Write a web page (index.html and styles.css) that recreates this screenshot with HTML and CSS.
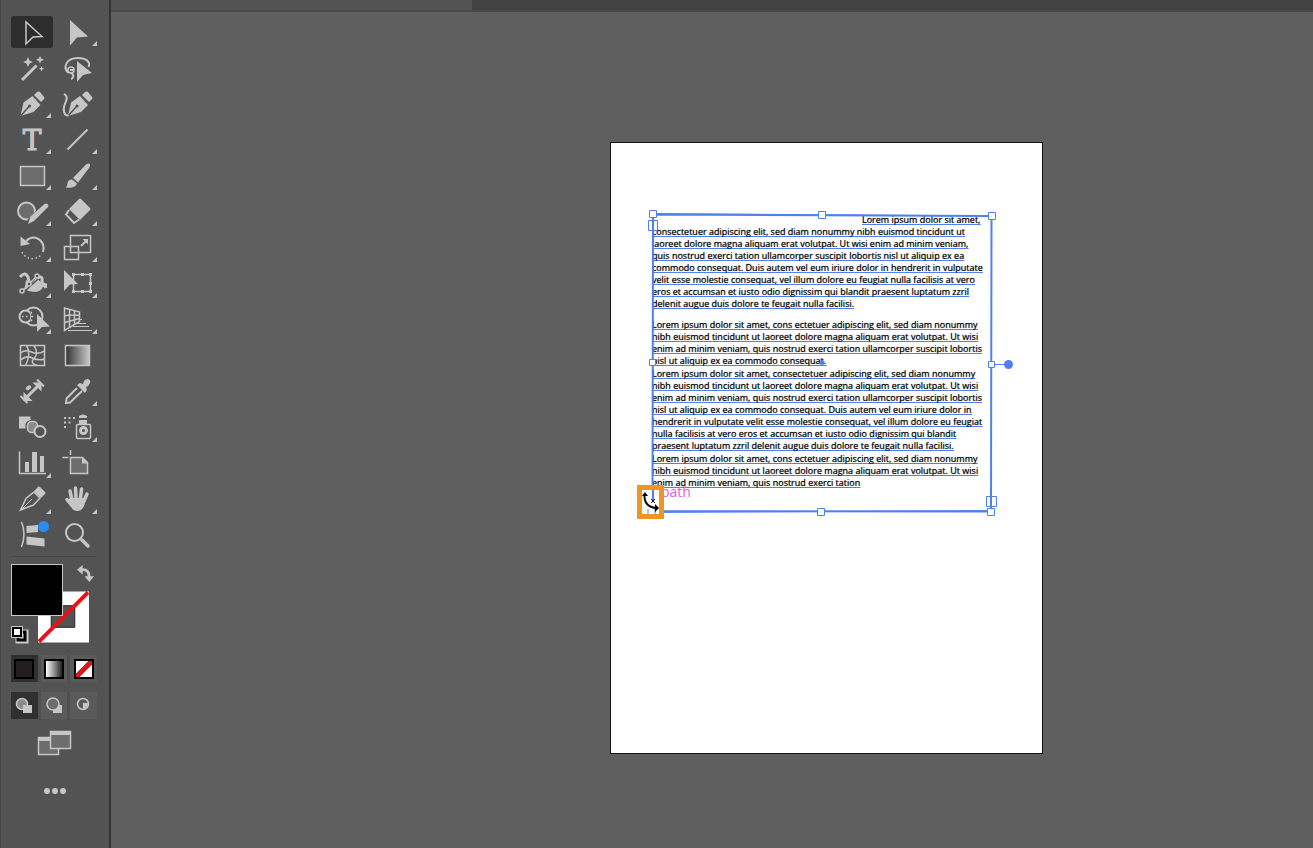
FILE: index.html
```html
<!DOCTYPE html>
<html lang="en">
<head>
    <meta charset="UTF-8">
    <meta name="viewport" content="width=device-width, initial-scale=1.0">
    <title>Vector editor</title>
    <link rel="stylesheet" href="styles.css">
</head>
<body>
    <div class="toolbar">
        <div class="tools">
            <button class="tool active" aria-label="Selection"><svg viewBox="0 0 42 32"><path class="line" d="M15 6v22l7-7 9-.5z"/></svg></button>
            <button class="tool more" aria-label="Direct selection"><svg viewBox="0 0 42 32"><path d="M13 4v25.500l7-8 11-1z"/></svg></button>

            <button class="tool" aria-label="Magic wand"><svg viewBox="0 0 42 32"><path class="line thick" d="M11 28L25.500 13.500"/><path d="M17 5l1.500 3.500L22 10l-3.500 1.500L17 15l-1.500-3.500L12 10l3.500-1.500zM29 4l1.200 2.500L33 7.700l-2.800 1.200L29 11.500l-1.200-2.600L25 7.700l2.800-1.200zM30.500 14l.8 1.900 1.900.8-1.900.8-.8 1.900-.8-1.900-1.900-.8 1.900-.8z"/></svg></button>
            <button class="tool" aria-label="Lasso"><svg viewBox="0 0 42 32"><path class="line wide" d="M12 21C5 16 9 6 21 6c8 0 13 4 10.500 9M14 21c3 1 3 5 0 6"/><circle class="line" cx="14" cy="18" r="3"/><path d="M13 17h3v2h-3zM20 9v21l6-7 9-2z"/></svg></button>

            <button class="tool more" aria-label="Pen"><svg viewBox="0 0 42 32"><path d="M9.500 28l3-13.500 9-6.500 8 9-7 7z"/><path d="M23 7l3-3q2-1 3 0l4 5q1 1 0 2l-3 3z"/><path class="cut" d="M10 27.500l8-9"/><circle class="hole" cx="18.500" cy="18" r="1.500"/></svg></button>
            <button class="tool" aria-label="Curvature"><svg viewBox="0 0 42 32"><path d="M11 28l3-13.500 9-6.500 8 9-7 7z"/><path d="M25 7l3-3q2-1 3 0l4 5q1 1 0 2l-3 3z"/><path class="cut" d="M11.500 27.500l8-9"/><circle class="hole" cx="20" cy="18" r="1.500"/><path class="line wide" d="M7 6c5 3 2 7 .5 11s-1 11 4 10.500"/></svg></button>

            <button class="tool more" aria-label="Type"><svg viewBox="0 0 42 32"><text class="type-icon" x="21" y="26">T</text></svg></button>
            <button class="tool more" aria-label="Line segment"><svg viewBox="0 0 42 32"><path class="line wide" d="M10.500 25.500l20-20"/></svg></button>

            <button class="tool more" aria-label="Rectangle"><svg viewBox="0 0 42 32"><path class="line shade" d="M9.500 6.500h24v19h-24z"/></svg></button>
            <button class="tool more" aria-label="Paintbrush"><svg viewBox="0 0 42 32"><path d="M16 18L29 4.500q3-2 4 0 .5 1.500-1 3.500L21 22.500zM15 19.500l5 4q-1 5-11.500 4 2-1.500 2-4 .5-4 4.500-4z"/></svg></button>

            <button class="tool more" aria-label="Shaper"><svg viewBox="0 0 42 32"><circle class="line shade wide" cx="15.500" cy="15" r="8.500"/><path class="gap" d="M19 26L36 9"/><path d="M17 28l2.500-7.500L33.500 8q2-1 3 0 1.500 1.500.5 3L23 25z"/></svg></button>
            <button class="tool more" aria-label="Eraser"><svg viewBox="0 0 42 32"><path d="M22 3q1-1 2 0l9 9q1 1 0 2l-10 10L12 13z"/><path class="line wide" d="M12 14l-3 4.500 8 8.500 5-3.500"/></svg></button>

            <button class="tool more" aria-label="Rotate"><svg viewBox="0 0 42 32"><path class="line wide" d="M15 9c9-8 20 0 17 11"/><path d="M9.500 4.500V14l9.500-2z"/><path class="line dots" d="M11 20c4 8 14 9 20 2"/></svg></button>
            <button class="tool more" aria-label="Scale"><svg viewBox="0 0 42 32"><path class="line" d="M13.500 3.500h20v17h-20zM7.500 14.500h14v13h-14z"/><path class="line wide" d="M24 14l5-5"/><path d="M25.500 7H31v5.500z"/></svg></button>

            <button class="tool more" aria-label="Width"><svg viewBox="0 0 42 32"><path class="line thick" d="M9 9q5-6 8 0 1 5 2 7t5 5M26 10q6-3 5 3 0 4 5 4M35 20q-2-5-4-2-3 5-7 4-4 1-10-2"/><path d="M15 12q3 1 5 5l5-7 5 4 1 5q-4 6-9 4-6 1-8-4z"/><path class="cut" d="M13 24L27 11"/><path class="line" d="M12 22L25 9"/><circle class="line back" cx="11" cy="23" r="2"/><circle class="line back" cx="26" cy="8" r="2"/><circle class="line back" cx="18" cy="16" r="2"/></svg></button>
            <button class="tool more" aria-label="Free transform"><svg viewBox="0 0 42 32"><path class="line" d="M16.500 6.500h17v17h-17z"/><path d="M15 5h3v3h-3zM24 5h3v3h-3zM32 5h3v3h-3zM32 14h3v3h-3zM32 22h3v3h-3zM24 22h3v3h-3zM15 22h3v3h-3zM7 2v21l6-6.500 8-.5z"/></svg></button>

            <button class="tool more" aria-label="Shape builder"><svg viewBox="0 0 42 32"><circle class="line wide" cx="22.500" cy="12.500" r="9"/><circle class="line wide back" cx="14.500" cy="12.500" r="6"/><path class="cut" d="M20 8q2 4 0 9"/><path class="line dots" d="M11 12.500h11M20 8q3 5 0 9"/><path d="M26 10v18l5-5 8-.5z"/></svg></button>
            <button class="tool more" aria-label="Perspective grid"><svg viewBox="0 0 42 32"><path class="line" d="M7.500 4v22.500l15-9V8zM12.500 5.500v18M17.500 6.500v14M7.500 11.500l15-.5M7.500 18.500l15-4"/><path class="line thin" d="M22 15.500h3M20 19.500h9M16 22.500h16M11 26.500h24"/></svg></button>

            <button class="tool" aria-label="Mesh"><svg viewBox="0 0 42 32"><path class="line" d="M9.500 5.500h24v20h-24zM9.500 13q5-4 11-1t13-1M9.500 20q6-5 12-2t12 1M15.500 5.500q5 8-1 20M23 5.500q5 8 0 13t4 7"/></svg></button>
            <button class="tool" aria-label="Gradient"><svg viewBox="0 0 42 32"><defs><linearGradient id="ramp"><stop offset="0" stop-color="#333"/><stop offset="1" stop-color="#c8c8c8"/></linearGradient></defs><path class="line ramp-fill" d="M8.500 5.500h24v20h-24z"/></svg></button>

            <button class="tool" aria-label="Measure"><svg viewBox="0 0 42 32"><path class="line wide" d="M9.500 20l7 7M26 3.500l7 7"/><path class="line thick" d="M14 23L29 8"/><path d="M12.500 25v-9l9 9zM30.500 6.500v9l-9-9z"/><path class="line finger" d="M16.500 12.500l2-1.500"/></svg></button>
            <button class="tool more" aria-label="Eyedropper"><svg viewBox="0 0 42 32"><path class="line wide" d="M20 12L9.500 22.500 9 27l4-.5L25 15"/><path d="M20 9l3-2 3 1q1-5 5-5 3 1 2 4-1 3-4 4l1 3-2 3z"/></svg></button>

            <button class="tool" aria-label="Blend"><svg viewBox="0 0 42 32"><path d="M8 4.500h11.500V8q-4 1-5 4v4.500H8z"/><rect class="line shade2" x="16.500" y="9.500" width="10" height="11" rx="4"/><circle class="line wide back" cx="29" cy="19.500" r="5.500"/></svg></button>
            <button class="tool more" aria-label="Symbol sprayer"><svg viewBox="0 0 42 32"><path d="M7 5h2v2H7zM11.500 5h2v2h-2zM16 5h2v2h-2zM7 9.500h2v2H7zM11.500 9.500h2v2h-2zM7 14h2v2H7zM22 4q4-3 8 0v2h-8zM22 8h8v4h-8z"/><rect class="line" x="19.500" y="12.500" width="14" height="14" rx="1"/><circle class="line thick" cx="26.500" cy="18.500" r="3"/></svg></button>

            <button class="tool more" aria-label="Column graph"><svg viewBox="0 0 42 32"><path class="line" d="M8.500 3.500v22H35"/><path d="M14 14h4v10h-4zM21 4h5v20h-5zM29 8h4v16h-4z"/></svg></button>
            <button class="tool" aria-label="Artboard"><svg viewBox="0 0 42 32"><path class="line shade" d="M13.500 9.500h12l5 5v11h-17z"/><path d="M25 9.500v6h6z"/><path class="line" d="M5.500 9.500h6M13.500 2v5"/></svg></button>

            <button class="tool more" aria-label="Slice"><svg viewBox="0 0 42 32"><path class="line" d="M9.500 26L15 14.500 23 8l6 6-6.500 7z"/><path class="line thin" d="M10 26l11-11"/><path d="M23 7l4-4q1-1 2 0l5 5q1 1 0 2l-4 4z"/></svg></button>
            <button class="tool more" aria-label="Hand"><svg viewBox="0 0 42 32"><path class="line finger" d="M15 16l-2-9M19 14l-.5-10M23.500 14l1-9M27 17l3-7M14.500 21L10 15.500"/><path d="M13 14h14l2 2-2 6q-2 5-7 5-4 0-6-4l-4-6z"/></svg></button>

            <button class="tool" aria-label="Text along curve"><svg viewBox="0 0 42 32"><path class="line" d="M10.500 2q5 12 0 25"/><path d="M15.500 6L27 5v7l-11.500 1zM15.500 16.500l18 2v8l-18-2z"/><circle class="notice" cx="32.500" cy="6.500" r="5.500"/></svg></button>
            <button class="tool" aria-label="Zoom"><svg viewBox="0 0 42 32"><circle class="line wide" cx="17.500" cy="12.500" r="8.500"/><path class="line finger" d="M25 20l6 6"/></svg></button>
        </div>

        <div class="colors">
            <button class="stroke-color" aria-label="Stroke"><svg viewBox="0 0 52 52"><path fill="#fff" d="M0 0h52v52H0z"/><path fill="#535353" stroke="#222" d="M13.500 14.500h24v22h-24z"/><path stroke="#e8101a" stroke-width="4" d="M1 51L51 1"/></svg></button>
            <button class="fill-color" aria-label="Fill"></button>
            <button class="swap" aria-label="Swap fill and stroke"><svg viewBox="0 0 18 18"><path class="line thick" d="M5 5q8-1 8 8"/><path d="M0 5l6-5v10zM8 12h10l-5 6z"/></svg></button>
            <button class="defaults" aria-label="Default colors"><svg viewBox="0 0 17 17"><path fill="none" stroke="#ccc" stroke-width="7" d="M8 7h6v7H8z"/><path fill="#ccc" stroke="#000" stroke-width="3" d="M7 6h7v8H7z"/><path fill="#fff" stroke="#ccc" d="M.5.500h11v11H.5z"/><path fill="#fff" stroke="#000" stroke-width="2" d="M2 2h8v8H2z"/></svg></button>
        </div>

        <div class="modes">
            <button class="mode active" aria-label="Color"><span class="swatch"></span></button>
            <button class="mode" aria-label="Gradient fill"><span class="swatch ramp"></span></button>
            <button class="mode" aria-label="None"><span class="swatch none"></span></button>
        </div>
        <div class="modes">
            <button class="mode active" aria-label="Draw normal"><svg viewBox="0 0 20 20"><circle class="line shade2" cx="8" cy="8" r="5.500"/><path d="M9 9h9v8H9z"/></svg></button>
            <button class="mode" aria-label="Draw behind"><svg viewBox="0 0 20 20"><path d="M9 9h9v8H9z"/><circle class="line shade" cx="9" cy="8" r="6"/></svg></button>
            <button class="mode" aria-label="Draw inside"><svg viewBox="0 0 20 20"><circle class="line" cx="9" cy="8" r="5.500"/><path d="M9 7h5q0 5-5 6z"/></svg></button>
        </div>

        <button class="screen-mode" aria-label="Screen mode"><svg viewBox="0 0 34 26"><path class="line shade" d="M.5 7.500h20v17H.5z"/><path d="M0 7h20v4H0z"/><path class="line shade" d="M12.500 1.500h20v17h-20z"/><path d="M12 1h21v4H12z"/></svg></button>
        <button class="edit-toolbar" aria-label="Edit toolbar"><svg viewBox="0 0 22 6"><circle cx="3" cy="3" r="3"/><circle cx="11" cy="3" r="3"/><circle cx="19" cy="3" r="3"/></svg></button>
    </div>

    <div class="workspace">
        <div class="tabs"><div class="tab"></div></div>
        <div class="canvas">
            <div class="artboard">
                <div class="story">
                    <p><span class="indent">Lorem ipsum dolor sit amet,</span><br>
                    <span>consectetuer adipiscing elit, sed diam nonummy nibh euismod tincidunt ut</span><br>
                    <span>laoreet dolore magna aliquam erat volutpat. Ut wisi enim ad minim veniam,</span><br>
                    <span>quis nostrud exerci tation ullamcorper suscipit lobortis nisl ut aliquip ex ea</span><br>
                    <span>commodo consequat. Duis autem vel eum iriure dolor in hendrerit in vulputate</span><br>
                    <span>velit esse molestie consequat, vel illum dolore eu feugiat nulla facilisis at vero</span><br>
                    <span>eros et accumsan et iusto odio dignissim qui blandit praesent luptatum zzril</span><br>
                    <span>delenit augue duis dolore te feugait nulla facilisi.</span></p>
                    <p class="spaced"><span>Lorem ipsum dolor sit amet, cons ectetuer adipiscing elit, sed diam nonummy</span><br>
                    <span>nibh euismod tincidunt ut laoreet dolore magna aliquam erat volutpat. Ut wisi</span><br>
                    <span>enim ad minim veniam, quis nostrud exerci tation ullamcorper suscipit lobortis</span><br>
                    <span>nisl ut aliquip ex ea commodo consequat.</span></p>
                    <p><span>Lorem ipsum dolor sit amet, consectetuer adipiscing elit, sed diam nonummy</span><br>
                    <span>nibh euismod tincidunt ut laoreet dolore magna aliquam erat volutpat. Ut wisi</span><br>
                    <span>enim ad minim veniam, quis nostrud exerci tation ullamcorper suscipit lobortis</span><br>
                    <span>nisl ut aliquip ex ea commodo consequat. Duis autem vel eum iriure dolor in</span><br>
                    <span>hendrerit in vulputate velit esse molestie consequat, vel illum dolore eu feugiat</span><br>
                    <span>nulla facilisis at vero eros et accumsan et iusto odio dignissim qui blandit</span><br>
                    <span>praesent luptatum zzril delenit augue duis dolore te feugait nulla facilisi.</span></p>
                    <p><span>Lorem ipsum dolor sit amet, cons ectetuer adipiscing elit, sed diam nonummy</span><br>
                    <span>nibh euismod tincidunt ut laoreet dolore magna aliquam erat volutpat. Ut wisi</span><br>
                    <span>enim ad minim veniam, quis nostrud exerci tation</span></p>
                </div>
                <span class="hint">path</span>
                <!-- slightly rotated frame with its handles -->
                <svg class="selection" viewBox="611 143 431 610">
                    <path class="frame" d="M653 214.500L991.500 216 991 511.500 652.500 511z"/>
                    <path class="frame thin" d="M652 213.500l339 2.500M653 512.500l338-2"/>
                    <path class="port" d="M648.500 220.500h9v10h-9zM986.500 496.500h10v10h-10z"/>
                    <path class="frame thin" d="M992 364.500h16"/>
                    <circle class="dot" cx="1008.500" cy="364.500" r="4.500"/>
                    <circle class="dot" cx="822" cy="362.500" r="2.500"/>
                    <path class="handle" d="M649.500 210.500h7v7h-7zM818.500 211.500h7v7h-7zM988.500 212.500h7v7h-7zM649.500 359.500h6v6h-6zM988.500 361.500h6v6h-6zM817.500 508.500h7v7h-7zM987.500 508.500h7v7h-7z"/>
                    <path class="callout" d="M639.500 487.500h22v29h-22z"/>
                    <path class="frame" d="M653 490v12"/>
                    <path class="frame thin" d="M648 514v-5M655 514v-5"/>
                    <path class="cursor-curve" d="M644.500 494q-1 13 12 14"/>
                    <path d="M642 496l3-4 3 4zM655 504l4 4-4 4z"/>
                    <path class="cursor-curve thin" d="M651 499l4 4M655 499l-4 4"/>
                </svg>
            </div>
        </div>
    </div>
</body>
</html>
```
FILE: styles.css
```css
* {
    box-sizing: border-box;
}

body {
    margin: 0;
    min-height: 100vh;
    display: flex;
    background: #5f5f5f;
    font-family: "Open Sans", "Noto Sans", sans-serif;
}

button {
    display: block;
    padding: 0;
    border: 0;
    background: none;
    font: inherit;
}

svg {
    display: block;
    width: 100%;
    height: 100%;
    overflow: visible;
}

/* toolbar */
.toolbar {
    flex: none;
    width: 111px;
    padding: 16px 12px 0 10px;
    background: #535353;
    border-left: 1px solid #444;
    border-right: 2px solid #333;
}

.toolbar svg {
    fill: #c6c6c6;
}

.tools {
    display: grid;
    grid-template-columns: 42px 42px;
    grid-auto-rows: 32px;
    gap: 4px;
    padding-bottom: 4px;
    border-bottom: 1px solid #484848;
}

.tool {
    position: relative;
    border-radius: 3px;
}

.tool.active {
    background: #2d2d2d;
}

.tool.more::after {
    content: "";
    position: absolute;
    right: 2px;
    bottom: 2px;
    border-left: 5px solid transparent;
    border-bottom: 5px solid #c6c6c6;
}

.toolbar .line {
    fill: none;
    stroke: #c6c6c6;
    stroke-width: 1.5;
}

.toolbar .wide {
    stroke-width: 2;
}

.toolbar .thick {
    stroke-width: 3;
}

.toolbar .thin {
    stroke-width: 1;
}

.toolbar .finger {
    stroke-width: 3.5;
    stroke-linecap: round;
}

.toolbar .dots {
    stroke-dasharray: 1.5 2.5;
}

.toolbar .shade {
    fill: #6d6d6d;
}

.toolbar .shade2 {
    fill: #8a8a8a;
}

.toolbar .ramp-fill {
    fill: url(#ramp);
}

.toolbar .back,
.toolbar .hole {
    fill: #535353;
}

.toolbar .cut {
    fill: none;
    stroke: #535353;
    stroke-width: 1.5;
}

.toolbar .gap {
    stroke: #535353;
    stroke-width: 7;
}

.toolbar .notice {
    fill: #2a8cf0;
}

.type-icon {
    font: 28px "DejaVu Serif", serif;
    text-anchor: middle;
    stroke: #c6c6c6;
}

/* fill and stroke */
.colors {
    position: relative;
    height: 86px;
    margin-top: 7px;
}

.colors button {
    position: absolute;
}

.fill-color {
    top: 0;
    left: 0;
    width: 52px;
    height: 52px;
    background: #000;
    border: 1px solid #c8c8c8;
}

.stroke-color {
    top: 27px;
    left: 27px;
    width: 51px;
    height: 52px;
}

.swap {
    top: 1px;
    left: 66px;
    width: 17px;
    height: 17px;
}

.defaults {
    top: 62px;
    left: 0;
    width: 17px;
    height: 17px;
}

.modes {
    display: grid;
    grid-template-columns: 1fr 1fr 1fr;
    gap: 3px;
    margin: 5px 0 10px;
    width: 86px;
    background: #505050;
}

.mode {
    display: flex;
    align-items: center;
    justify-content: center;
    height: 27px;
    background: #5a5a5a;
}

.mode.active {
    background: #303030;
}

.mode svg {
    width: 20px;
    height: 20px;
}

.swatch {
    width: 20px;
    height: 20px;
    border: 2px solid #000;
    background: #231f20;
}

.swatch.ramp {
    background: linear-gradient(to right, #fff, #222);
}

.swatch.none {
    background: linear-gradient(135deg, #fff 40%, #e8101a 40%, #e8101a 60%, #fff 60%);
}

.screen-mode {
    width: 34px;
    height: 26px;
    margin: 11px auto 0 27px;
}

.edit-toolbar {
    width: 22px;
    height: 6px;
    margin: 32px auto 0 33px;
}

/* document */
.workspace {
    flex: 1;
    display: flex;
    flex-direction: column;
}

.tabs {
    height: 12px;
    background: #424242;
    border-bottom: 2px solid #494949;
}

.tab {
    width: 30%;
    height: 10px;
    background: #535353;
}

.canvas {
    position: relative;
    flex: 1;
    min-height: 760px;
}

.artboard {
    position: absolute;
    top: 130px;
    left: 499px;
    width: 433px;
    height: 612px;
    padding: 71px 41px;
    background: #fff;
    border: 1px solid #111;
}

.story {
    font-size: 9px;
    line-height: 12px;
    font-weight: 500;
    color: #000;
    white-space: nowrap;
    text-shadow: 0 0 1px #555;
}

.story p {
    margin: 0 0 1px;
}

.story .spaced {
    margin-top: 9px;
}

.story span {
    text-decoration: underline #4f80ee 1px;
    text-underline-offset: 1px;
    text-decoration-skip-ink: none;
}

.story .indent {
    margin-left: 210px;
}

.hint {
    position: absolute;
    top: 343px;
    left: 50px;
    font-size: 14px;
    line-height: 12px;
    color: #f056e0;
}

.selection {
    position: absolute;
    inset: 0;
}

.frame {
    fill: none;
    stroke: #4f80ee;
    stroke-width: 2;
}

.frame.thin {
    stroke-width: 1;
}

.handle {
    fill: #fff;
    stroke: #4f80ee;
}

.port {
    fill: none;
    stroke: #4f80ee;
}

.dot {
    fill: #4f80ee;
}

.callout {
    fill: #fff;
    stroke: #ef9526;
    stroke-width: 5;
}

.cursor-curve {
    fill: none;
    stroke: #111;
    stroke-width: 2;
}

.cursor-curve.thin {
    stroke-width: 1;
}
```
